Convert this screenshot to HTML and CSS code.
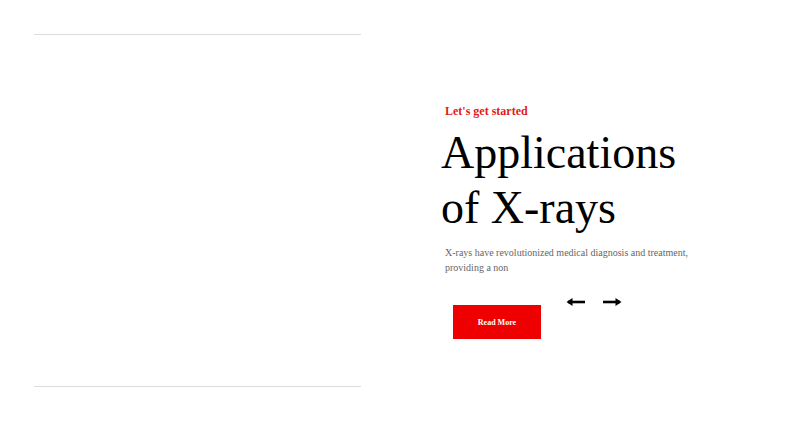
FILE: index.html
```html
<!DOCTYPE html>
<html lang="en">
<head>
<meta charset="utf-8">
<title>Applications of X-rays</title>
<link rel="stylesheet" href="styles.css">
</head>
<body>
<main class="slide">
  <div class="media"></div>
  <section class="content">
    <p class="eyebrow">Let's get started</p>
    <h1 class="title">Applications<br>of X-rays</h1>
    <p class="text">X-rays have revolutionized medical diagnosis and treatment, providing a non</p>
    <div class="actions">
      <a class="btn" href="#">Read More</a>
      <div class="nav">
        <button class="arrow" aria-label="Previous">
          <svg width="20" height="10" viewBox="0 0 20 10"><path d="M2 5H19" stroke="#000" stroke-width="2.6"/><path d="M0.5 5L6.5 1V9Z" fill="#000"/></svg>
        </button>
        <button class="arrow" aria-label="Next">
          <svg width="20" height="10" viewBox="0 0 20 10"><path d="M1 5H18" stroke="#000" stroke-width="2.6"/><path d="M19.5 5L13.5 1V9Z" fill="#000"/></svg>
        </button>
      </div>
    </div>
  </section>
</main>
</body>
</html>
```
FILE: styles.css
```css
html, body {
  margin: 0;
  padding: 0;
  background: #fff;
}
body {
  font-family: "Liberation Serif", "Times New Roman", serif;
  color: #000;
}
.slide {
  display: flex;
  align-items: flex-start;
  width: 800px;
  height: 430px;
  padding: 34px 0 0 34px;
  box-sizing: border-box;
}
.media {
  width: 327px;
  height: 351px;
  border-top: 1px solid #dcdcdc;
  border-bottom: 1px solid #dcdcdc;
  flex: none;
}
.content {
  margin-left: 80px;
  padding-top: 70px;
  width: 300px;
}
.eyebrow {
  margin: 0 0 4px 4px;
  font-size: 12px;
  line-height: 15px;
  font-weight: bold;
  color: #e11b1b;
}
.title {
  margin: 0;
  padding-top: 2px;
  font-size: 46px;
  line-height: 55px;
  font-weight: normal;
  color: #000;
}
.text {
  margin: 10px 0 0 4px;
  width: 250px;
  font-size: 10px;
  line-height: 15px;
  color: #666;
}
.actions {
  display: flex;
  align-items: flex-start;
  margin-top: 21px;
  margin-left: 12px;
}
.btn {
  display: flex;
  align-items: center;
  justify-content: center;
  width: 88px;
  height: 34px;
  margin-top: 9px;
  background: #ee0000;
  color: #fff;
  font-size: 8px;
  font-weight: bold;
  text-decoration: none;
}
.nav {
  display: flex;
  gap: 16px;
  margin-left: 25px;
  margin-top: 1px;
}
.arrow {
  display: block;
  padding: 0;
  border: 0;
  background: none;
  width: 20px;
  height: 10px;
}
.arrow svg {
  display: block;
}
```
